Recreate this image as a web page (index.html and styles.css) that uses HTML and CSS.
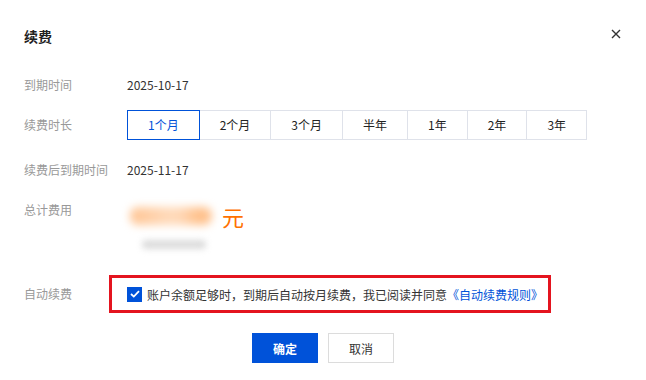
FILE: index.html
```html
<!DOCTYPE html>
<html lang="zh-CN">
<head>
  <meta charset="UTF-8">
  <title>续费</title>
  <link rel="stylesheet" href="styles.css">
</head>
<body>
  <div class="dialog">
    <div class="dialog-header">
      <h3 class="dialog-title">续费</h3>
      <span class="dialog-close">
        <svg width="10" height="10" viewBox="0 0 10 10"><path d="M1 1L9 9M9 1L1 9" stroke="#333" stroke-width="1.4" fill="none"/></svg>
      </span>
    </div>

    <div class="form">
      <div class="row row-expire">
        <div class="label">到期时间</div>
        <div class="value">2025-10-17</div>
      </div>

      <div class="row row-period">
        <div class="label">续费时长</div>
        <div class="segments">
          <span class="seg active">1个月</span>
          <span class="seg">2个月</span>
          <span class="seg">3个月</span>
          <span class="seg">半年</span>
          <span class="seg">1年</span>
          <span class="seg">2年</span>
          <span class="seg">3年</span>
        </div>
      </div>

      <div class="row row-after">
        <div class="label">续费后到期时间</div>
        <div class="value">2025-11-17</div>
      </div>

      <div class="row row-total">
        <div class="label">总计费用</div>
        <div class="price">
          <div class="price-line">
            <span class="price-blur"></span>
            <span class="price-unit">元</span>
          </div>
          <span class="price-sub"></span>
        </div>
      </div>

      <div class="row row-auto">
        <div class="label">自动续费</div>
        <div class="auto-box">
          <span class="checkbox">
            <svg width="10" height="8" viewBox="0 0 10 8"><path d="M1 4L3.8 6.6L9 1.2" stroke="#fff" stroke-width="1.8" fill="none"/></svg>
          </span>
          <span class="auto-text">账户余额足够时，到期后自动按月续费，我已阅读并同意<a class="link">《自动续费规则》</a></span>
        </div>
      </div>
    </div>

    <div class="dialog-footer">
      <button class="btn btn-primary">确定</button>
      <button class="btn">取消</button>
    </div>
  </div>
</body>
</html>
```

FILE: styles.css
```css
body {
  margin: 0;
  background: #fff;
  font-family: "Noto Sans CJK SC", "Noto Sans", sans-serif;
  font-size: 12px;
  color: #333;
}
.dialog {
  padding: 24px;
  width: 598px;
}
.dialog-header {
  display: flex;
  justify-content: space-between;
  align-items: center;
  height: 24px;
}
.dialog-title {
  margin: 0;
  font-size: 14px;
  font-weight: 600;
  color: #222;
}
.dialog-close {
  display: flex;
  margin-right: 1px;
  margin-top: -4px;
}
.form {
  margin-top: 27px;
}
.row {
  display: flex;
  align-items: center;
}
.label {
  width: 103px;
  flex-shrink: 0;
  color: #999;
  line-height: 20px;
}
.value {
  line-height: 20px;
  color: #333;
}
.row-period {
  margin-top: 15px;
}
.segments {
  display: flex;
}
.seg {
  height: 28px;
  line-height: 28px;
  padding: 0 20px;
  border: 1px solid #dfe2ea;
  margin-left: -1px;
  color: #222;
  white-space: nowrap;
}
.seg:first-child {
  margin-left: 0;
}
.seg.active {
  border-color: #0052d9;
  color: #0052d9;
  position: relative;
}
.row-after {
  margin-top: 20px;
}
.row-total {
  margin-top: 20px;
  align-items: flex-start;
}
.price {
  display: flex;
  flex-direction: column;
}
.price-line {
  display: flex;
  align-items: center;
  height: 34px;
  margin-top: -1px;
}
.price-blur {
  width: 82px;
  height: 18px;
  margin-left: 3px;
  background: linear-gradient(90deg, #ffc594 0%, #ffd9b8 45%, #ffd9b8 60%, #ffc08a 85%, #ffc594 100%);
  border-radius: 8px;
  filter: blur(4px);
}
.price-unit {
  margin-left: 10px;
  font-size: 22px;
  color: #ff7200;
}
.price-sub {
  width: 64px;
  height: 9px;
  margin: 7px 0 0 15px;
  background: #dcdcdc;
  border-radius: 4px;
  filter: blur(3px);
}
.row-auto {
  margin-top: 26px;
}
.auto-box {
  display: flex;
  align-items: center;
  width: 411px;
  height: 32px;
  margin-left: -18px;
  padding: 0 10px 0 15px;
  border: 3px solid #e4141f;
}
.checkbox {
  width: 15px;
  height: 15px;
  background: #0052d9;
  display: flex;
  align-items: center;
  justify-content: center;
  flex-shrink: 0;
}
.auto-text {
  margin-left: 5px;
  color: #333;
  white-space: nowrap;
}
.link {
  color: #0052d9;
}
.dialog-footer {
  display: flex;
  justify-content: center;
  gap: 10px;
  margin-top: 20px;
}
.btn {
  height: 30px;
  min-width: 66px;
  padding: 0 20px;
  border: 1px solid #dcdcdc;
  background: #fff;
  color: #333;
  font-family: inherit;
  font-size: 12px;
}
.btn-primary {
  background: #0052d9;
  border-color: #0052d9;
  color: #fff;
  font-weight: 600;
}
```
